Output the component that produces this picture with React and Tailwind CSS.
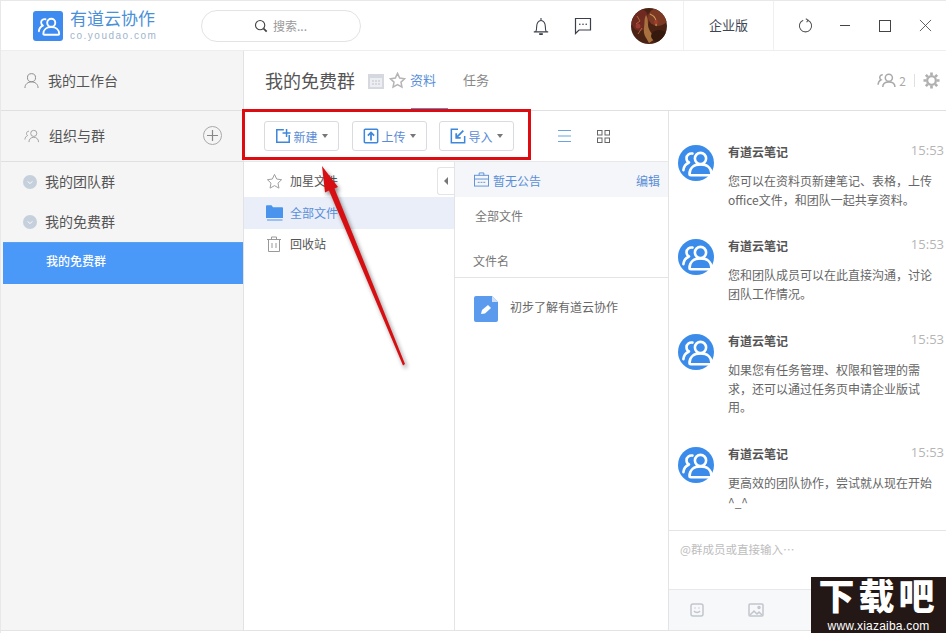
import React from "react";

function TeamGlyph({ className = "", stroke = "#fff", sw = 2.6 }) {
  return (
    <svg viewBox="0 0 36 36" className={className} fill="none" stroke={stroke} strokeWidth={sw} strokeLinecap="round" strokeLinejoin="round">
      <circle cx="22.5" cy="13.5" r="5.6" />
      <path d="M11.5 29c0-6 4.5-9.6 11-9.6s11 3.6 11 9.6c0 .8-.6 1.2-1.4 1.2H13c-.9 0-1.5-.5-1.5-1.2z" />
      <path d="M14.5 8.6c-3-.6-6 1.4-6 4.6 0 2 1 3.5 2.5 4.3-3 1.3-5.3 4-5.6 7.7" />
    </svg>
  );
}

function ChatAvatar() {
  return (
    <div className="w-9 h-9 rounded-full bg-[#3a8bea] shrink-0 flex items-center justify-center">
      <TeamGlyph className="w-9 h-9" />
    </div>
  );
}

function Message({ text, h }) {
  return (
    <div className={`flex pl-[9px] pr-[2px] ${h}`}>
      <ChatAvatar />
      <div className="ml-[14px] flex-1 min-w-0">
        <div className="flex items-start justify-between h-[27px]">
          <span className="text-[12px] font-bold text-[#555] leading-[15px] mt-[-1px]">有道云笔记</span>
          <span className="text-[13px] text-[#b5b5b5] leading-[14px] mt-[-2px] font-['Open_Sans',sans-serif]">15:53</span>
        </div>
        <p className="text-[12px] leading-[18.5px] text-[#666] w-[206px]">{text}</p>
      </div>
    </div>
  );
}

function ToolButton({ icon, label, w }) {
  return (
    <button className={`${w} h-[30px] rounded-[3px] border border-[#d9dbe0] bg-white flex items-center justify-center text-[12px] text-[#5a8bd6]`}>
      {icon}
      <span className="ml-[2px] mt-[2px]">{label}</span>
      <span className="ml-[4px] w-0 h-0 border-x-[3px] border-x-transparent border-t-[4px] border-t-[#777]" />
    </button>
  );
}

const blue = "#3f87da";

export default function App() {
  return (
    <div className="relative w-[946px] h-[633px] overflow-hidden bg-white font-['Noto_Sans_CJK_SC','Noto_Sans',sans-serif] text-[#555]">
      <div className="h-[633px] flex flex-col border-l border-t border-[#e8e8e8]">
        {/* Header */}
        <header className="h-[50px] shrink-0 flex items-center border-b border-[#eeeeee]">
          <div className="ml-[32px] w-[30px] h-[30px] rounded-[3px] bg-[#3d8bf0] flex items-center justify-center">
            <TeamGlyph className="w-[26px] h-[26px]" />
          </div>
          <div className="ml-[7px] w-[100px]">
            <div className="text-[17px] leading-[20px] text-[#4a90d9] font-['Liberation_Sans','Noto_Sans_CJK_SC',sans-serif]">有道云协作</div>
            <div className="text-[10px] leading-[12px] text-[#9fb5cc] tracking-[1.5px] font-['Liberation_Sans',sans-serif]">co.youdao.com</div>
          </div>
          <div className="ml-[31px] w-[160px] h-[32px] rounded-full border border-[#e3e3e6] flex items-center pl-[52px] text-[12px] text-[#999]">
            <svg viewBox="0 0 16 16" className="w-[14px] h-[14px] mr-[5px]" fill="none" stroke="#444" strokeWidth="1.3"><circle cx="7" cy="7" r="5.3" /><path d="M11 11l3.5 3.5" strokeWidth="2" /></svg>
            搜索...
          </div>
          <div className="ml-[169px] w-[22px] flex justify-center">
            <svg viewBox="0 0 20 22" className="w-[18px] h-[20px]" fill="none" stroke="#3a3f4b" strokeWidth="1.2"><path d="M2 17.5h16M4 17.5c1.2-1.5 1.2-3 1.2-6 0-3.6 2-6.7 4.8-6.7s4.8 3.100 4.800 6.700c0 3 0 4.500 1.200 6M10 2v2.800" /><path d="M8 20h4" strokeWidth="2" /></svg>
          </div>
          <div className="ml-[21px] w-[20px] flex justify-center">
            <svg viewBox="0 0 18 18" className="w-[18px] h-[18px]" fill="none" stroke="#3a3f4b" strokeWidth="1.2"><path d="M1.500 1.500h15v11.500H5L1.500 16.500z" /><circle cx="5.800" cy="7.300" r=".8" fill="#3a3f4b" stroke="none" /><circle cx="9" cy="7.300" r=".8" fill="#3a3f4b" stroke="none" /><circle cx="12.200" cy="7.300" r=".8" fill="#3a3f4b" stroke="none" /></svg>
          </div>
          <div className="ml-[38px] w-[36px] h-[36px] rounded-full overflow-hidden shrink-0">
            <svg viewBox="0 0 36 36" className="w-9 h-9">
              <rect width="36" height="36" fill="#4a2214" />
              <ellipse cx="9" cy="12" rx="9" ry="11" fill="#6e2a20" />
              <ellipse cx="27" cy="9" rx="10" ry="9" fill="#7c3a24" />
              <path d="M15 7c3 5 1 9 3 14s5 6 6 10l-6 4c-3-6-6-8-5-15s0-9 2-13z" fill="#a8703e" />
              <path d="M19 6c5 2 7 7 6 12" stroke="#c99a58" strokeWidth="1.300" fill="none" />
              <path d="M6 8l3 5-4 3M11 20l-4 6" stroke="#b0653c" strokeWidth="1" fill="none" />
              <circle cx="7" cy="18" r="2.500" fill="#9c3a34" />
              <circle cx="25" cy="14" r="2" fill="#a33c2c" />
              <ellipse cx="28" cy="28" rx="8" ry="6" fill="#35190d" />
            </svg>
          </div>
          <div className="ml-[16px] h-[49px] w-[91px] border-x border-[#f0f0f0] flex items-center justify-center pb-[1px] text-[13px] text-[#3d4654]">企业版</div>
          <div className="ml-[24px]">
            <svg viewBox="0 0 16 16" className="w-[15px] h-[15px]" fill="none" stroke="#555" strokeWidth="1.100"><path d="M10.500 2.300A6.500 6.500 0 1 1 5.500 2.300" /><path d="M8.300 .8l2.400 1.500-1.500 2.300" /></svg>
          </div>
          <div className="ml-[27px] w-[10px] h-[1px] bg-[#444]" />
          <div className="ml-[29px] w-[12px] h-[12px] border border-[#444]" />
          <div className="ml-[28px]">
            <svg viewBox="0 0 14 14" className="w-[13px] h-[13px]" fill="none" stroke="#444" strokeWidth=".9"><path d="M1 1l12 12M13 1L1 13" /></svg>
          </div>
        </header>

        <div className="flex-1 flex min-h-0 mb-[2px] border-b border-[#e4e4e4]">
          {/* Sidebar */}
          <aside className="w-[243px] shrink-0 bg-[#f5f5f6] border-r border-[#e2e2e4] flex flex-col pl-[2px]">
            <div className="h-[60px] -ml-[2px] flex items-center pl-[23px] pb-[1px] border-b border-[#e0e0e2] text-[14px] text-[#555]">
              <svg viewBox="0 0 16 18" className="w-[15px] h-[17px] mr-[9px]" fill="none" stroke="#888" strokeWidth="1"><circle cx="8" cy="6" r="4.300" /><path d="M1 17c0-4 3-6.500 7-6.500s7 2.500 7 6.500" /></svg>
              我的工作台
            </div>
            <div className="h-[51px] -ml-[2px] flex items-center pl-[23px] pr-[21px] pb-[1px] border-b border-[#e0e0e2] text-[14px]">
              <svg viewBox="0 0 18 16" className="w-[16px] h-[14px] mr-[9px]" fill="none" stroke="#999" strokeWidth="1"><circle cx="11" cy="5" r="3.500" /><path d="M5.500 15c0-3.500 2.300-5.500 5.500-5.500s5.500 2 5.500 5.500" /><path d="M5.500 2.500c-1.800 0-2.800 1.300-2.800 2.700 0 1 .5 1.800 1.200 2.300-1.800.8-2.900 2.500-3 4.500" /></svg>
              <span className="flex-1">组织与群</span>
              <div className="w-[19px] h-[19px] rounded-full border border-[#a9a9ad] flex items-center justify-center">
                <svg viewBox="0 0 11 11" className="w-[11px] h-[11px]" stroke="#888" strokeWidth="1.200"><path d="M5.500 0v11M0 5.500h11" /></svg>
              </div>
            </div>
            <div className="h-[40px] flex items-center pl-[20px] text-[14px]">
              <Chevron />
              <span className="ml-[8px] -mt-[2px]">我的团队群</span>
            </div>
            <div className="h-[40px] flex items-center pl-[20px] text-[14px]">
              <Chevron />
              <span className="ml-[8px] -mt-[2px]">我的免费群</span>
            </div>
            <div className="h-[42px] bg-[#4a98f7] flex items-center pl-[43px] pb-[5px] text-[12px] font-medium text-white border-t border-[#5aa0f0]">我的免费群</div>
          </aside>

          {/* Main */}
          <main className="flex-1 min-w-0 flex flex-col">
            <div className="h-[60px] shrink-0 flex items-center border-b border-[#e0e0e2] pl-[21px] pr-[6px]">
              <span className="text-[18px] text-[#555]">我的免费群</span>
              <svg viewBox="0 0 16 16" className="w-[16px] h-[16px] ml-[13px]" fill="#d5d8de"><path d="M0 1h16v15H0z" /><path d="M2 5h12v9H2z" fill="#eceef1" /><path d="M4 7h2v2H4zM7 7h2v2H7zM10 7h2v2h-2zM4 10h2v2H4zM7 10h2v2H7zM10 10h2v2h-2z" /></svg>
              <svg viewBox="0 0 18 18" className="w-[17px] h-[17px] ml-[5px]" fill="none" stroke="#b5b5b5" strokeWidth="1.600"><path d="M9 1.500l2.300 4.900 5.200.7-3.800 3.600 1 5.300L9 13.400 4.300 16l1-5.300L1.500 7.100l5.200-.7z" /></svg>
              <div className="ml-[4px] relative h-[60px] w-[38px] flex items-center pb-[2px] text-[13px] text-[#5a8fd8]">
                资料
                <div className="absolute left-[1px] right-0 bottom-0 h-[3px] bg-[#6c86c4]" />
              </div>
              <span className="ml-[15px] -mt-[2px] text-[13px] text-[#888]">任务</span>
              <div className="ml-auto flex items-center text-[12px] text-[#a9a9a9]">
                <svg viewBox="0 0 20 16" className="w-[19px] h-[15px] mr-[3px]" fill="none" stroke="#a9a9a9" strokeWidth="1.600"><circle cx="12.500" cy="5" r="3.800" /><path d="M6 15c0-3.500 2.700-5.500 6.500-5.500S19 11.500 19 15" /><path d="M6 1.800c-2 0-3.200 1.400-3.200 3 0 1.100.6 2 1.400 2.500C2.300 8.100 1.100 10 1 12.500" /></svg>
                2
                <span className="mx-[8px] w-[1px] h-[13px] bg-[#e0e0e0]" />
                <svg viewBox="0 0 18 18" className="w-[17px] h-[17px]" fill="none" stroke="#b0b0b0"><circle cx="9" cy="9" r="4.600" strokeWidth="2.400" /><path d="M9 .5v3M9 14.500v3M.5 9h3M14.500 9h3M3 3l2.100 2.100M12.900 12.900L15 15M3 15l2.100-2.100M12.900 5.100L15 3" strokeWidth="2.800" /></svg>
              </div>
            </div>

            <div className="flex-1 min-h-0 flex">
              <div className="w-[424px] shrink-0 flex flex-col">
                {/* Toolbar */}
                <div className="h-[51px] shrink-0 flex items-center pl-[20px] border-b border-[#e8e8ea]">
                  <ToolButton w="w-[75px]" label="新建" icon={
                    <svg viewBox="0 0 18 18" className="w-[16px] h-[16px]" fill="none" stroke={blue} strokeWidth="1.700"><path d="M10 2H2v14h14V8" /><path d="M13 1v9M8.500 5.500h9" /></svg>} />
                  <div className="ml-[13px]">
                    <ToolButton w="w-[75px]" label="上传" icon={
                      <svg viewBox="0 0 18 18" className="w-[16px] h-[16px]" fill="none" stroke={blue} strokeWidth="1.700"><rect x="1.500" y="1.500" width="15" height="15" rx="1" /><path d="M9 14V5M5.500 8.500L9 5l3.500 3.500" strokeWidth="2" /></svg>} />
                  </div>
                  <div className="ml-[12px]">
                    <ToolButton w="w-[75px]" label="导入" icon={
                      <svg viewBox="0 0 18 18" className="w-[16px] h-[16px]" fill="none" stroke={blue} strokeWidth="1.700"><path d="M9 1.500H1.500v15h15V9" /><path d="M15 3L8 10M7 6v5h5" strokeWidth="2" /></svg>} />
                  </div>
                  <svg viewBox="0 0 13 12" className="w-[13px] h-[12px] ml-[44px]" stroke="#6aa3e0" strokeWidth="1"><path d="M0 .5h13M0 6h13M0 11.500h13" /></svg>
                  <svg viewBox="0 0 13 13" className="w-[13px] h-[13px] ml-[26px]" fill="none" stroke="#666" strokeWidth="1"><rect x=".5" y=".5" width="4.500" height="4.500" /><rect x="8" y=".5" width="4.500" height="4.500" /><rect x=".5" y="8" width="4.500" height="4.500" /><rect x="8" y="8" width="4.500" height="4.500" /></svg>
                </div>

                <div className="flex-1 min-h-0 flex">
                  {/* Tree */}
                  <div className="relative w-[211px] shrink-0 border-r border-[#e4e4e6] pt-[3px] text-[12px]">
                    <div className="h-[32px] flex items-center pl-[22px]">
                      <svg viewBox="0 0 18 18" className="w-[17px] h-[17px] mr-[7px]" fill="none" stroke="#999" strokeWidth="1"><path d="M9 1.500l2.300 4.900 5.200.7-3.800 3.600 1 5.300L9 13.400 4.300 16l1-5.300L1.500 7.100l5.200-.7z" /></svg>
                      加星文件
                    </div>
                    <div className="h-[32px] flex items-center pl-[22px] bg-[#e9eef8] text-[#5a8fd8]">
                      <svg viewBox="0 0 17 16" className="w-[17px] h-[16px] mr-[7px]"><path d="M0 1.500C0 .8.500.3 1 .3h4.500l1.500 2h9c.6 0 1 .5 1 1V13H0z" fill="#4a94ee" /><path d="M1 15h15.500" stroke="#4a94ee" strokeWidth="1" /></svg>
                      全部文件
                    </div>
                    <div className="h-[30px] flex items-center pl-[22px]">
                      <svg viewBox="0 0 16 16" className="w-[16px] h-[16px] mr-[8px]" fill="none" stroke="#999" strokeWidth="1"><path d="M1 3.500h14M5.500 3.500V1h5v2.500M2.500 3.500v12h11v-12M6 7v5M10 7v5" /></svg>
                      回收站
                    </div>
                    <div className="absolute right-0 top-[5px] w-[17px] h-[28px] rounded-l-[3px] border border-r-0 border-[#e4e4e6] bg-white flex items-center justify-center">
                      <span className="w-0 h-0 border-y-[4px] border-y-transparent border-r-[4px] border-r-[#777]" />
                    </div>
                  </div>

                  {/* Files */}
                  <div className="flex-1 min-w-0 flex flex-col">
                    <div className="h-[35px] bg-[#f5f6f9] flex items-center pl-[19px] pr-[8px] pt-[2px] text-[12px] text-[#5a8fd8]">
                      <svg viewBox="0 0 16 16" className="w-[15px] h-[15px] mr-[4px] -mt-[3px]" fill="none" stroke="#5a8fd8" strokeWidth="1"><rect x=".5" y="3.500" width="15" height="11.500" /><path d="M5.500 3.500V1h5v2.500M.5 7.500h15M4 11h2M7 11h2M10 11h2" /></svg>
                      <span className="flex-1">暂无公告</span>
                      <span>编辑</span>
                    </div>
                    <div className="h-[37px] flex items-center pl-[20px] text-[12px] text-[#777]">全部文件</div>
                    <div className="h-[44px] pt-[18px] pl-[18px] border-b border-[#e4e4e6] text-[12px] leading-[17px] text-[#777]">文件名</div>
                    <div className="flex items-center pl-[19px] mt-[18px] text-[12px] text-[#666]">
                      <svg viewBox="0 0 24 26" className="w-[24px] h-[26px] mr-[12px]"><path d="M2 0h16l6 6v18a2 2 0 0 1-2 2H2a2 2 0 0 1-2-2V2a2 2 0 0 1 2-2z" fill="#5c9aee" /><path d="M18 0l6 6h-6z" fill="#cfe0f8" /><path d="M7 18l1-4 6-5 3 3-6 5.500z" fill="#fff" /></svg>
                      <span className="-mt-[5px]">初步了解有道云协作</span>
                    </div>
                  </div>
                </div>
              </div>

              {/* Chat */}
              <div className="flex-1 min-w-0 flex flex-col border-l border-[#e4e4e6]">
                <div className="h-[419px] shrink-0 pt-[34px]">
                  <Message h="h-[94px]" text="您可以在资料页新建笔记、表格，上传office文件，和团队一起共享资料。" />
                  <Message h="h-[95px]" text="您和团队成员可以在此直接沟通，讨论团队工作情况。" />
                  <Message h="h-[113px]" text="如果您有任务管理、权限和管理的需求，还可以通过任务页申请企业版试用。" />
                  <Message h="h-[80px]" text="更高效的团队协作，尝试就从现在开始 ^_^" />
                </div>
                <div className="h-[59px] shrink-0 border-t border-[#e4e4e6] pl-[11px] pt-[10px] text-[11.5px] leading-[16px] text-[#bdbdbd]">@群成员或直接输入…</div>
                <div className="flex-1 bg-[#f7f8fa] border-t border-[#e8e8ea] flex items-center pl-[21px]">
                  <svg viewBox="0 0 14 14" className="w-[14px] h-[14px]" fill="none" stroke="#c2c6cc" strokeWidth="1.500"><rect x="1" y="1" width="12" height="12" rx="2" /><path d="M4 8c1.500 2 4.500 2 6 0M4.500 5h1M8.500 5h1" /></svg>
                  <svg viewBox="0 0 16 14" className="w-[16px] h-[14px] ml-[44px]" fill="none" stroke="#c2c6cc" strokeWidth="1.500"><rect x="1" y="1" width="14" height="12" rx="1" /><path d="M2 12l4-4 3 3 2-2 3 3" /><circle cx="11" cy="4.500" r="1" /></svg>
                </div>
              </div>
            </div>
          </main>
        </div>
      </div>

      {/* Screenshot annotations */}
      <div className="absolute left-[242px] top-[109px] w-[289px] h-[51px] border-[3px] border-[#dc0c10]" />
      <svg className="absolute left-[300px] top-[150px]" width="120" height="230" viewBox="0 0 120 230" style={{ filter: "drop-shadow(2px 3px 2px rgba(0,0,0,.45))" }}>
        <path d="M22 16L38 37 34.500 38.500 105 214 103 215.500 29 40.500 25 42.500z" fill="#d80f12" />
      </svg>

      {/* Watermark */}
      <div className="absolute right-0 bottom-0 w-[135px] h-[56px] bg-[#231815] flex flex-col items-center justify-between overflow-hidden">
        <div className="text-[36px] leading-[42px] font-black text-white tracking-[4px] whitespace-nowrap font-['Liberation_Sans','Noto_Sans_CJK_SC',sans-serif]">下载吧</div>
        <div className="text-[12px] leading-[14px] text-white font-['Liberation_Sans',sans-serif] tracking-[0.2px]">www.xiazaiba.com</div>
      </div>
    </div>
  );
}

function Chevron() {
  return (
    <span className="w-[14px] h-[14px] rounded-full bg-[#c5d0dc] flex items-center justify-center">
      <svg viewBox="0 0 8 6" className="w-[6px] h-[5px]" fill="none" stroke="#fff" strokeWidth="1.300"><path d="M1 1.500l3 3 3-3" /></svg>
    </span>
  );
}
